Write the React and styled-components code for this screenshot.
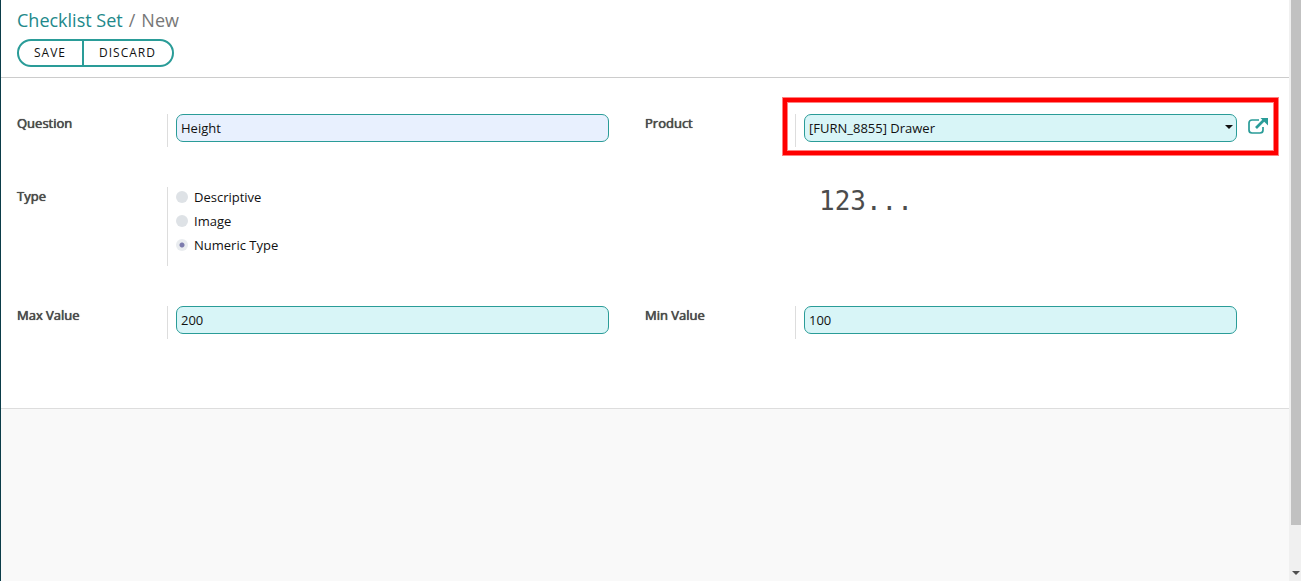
import React, { useState } from "react";
import styled, { createGlobalStyle } from "styled-components";

const teal = "#2a9c98";

const GlobalStyle = createGlobalStyle`
  *, *::before, *::after { box-sizing: border-box; }
  body {
    margin: 0;
    background: #f9f9f9;
    color: #111;
    font: 13px/20px "Open Sans", "Noto Sans", sans-serif;
  }
`;

const Page = styled.div`
  display: flex;
  min-height: 100vh;
  border-left: 1px solid #0b3c49;
`;

const Main = styled.main`
  flex: 1;
  min-width: 0;
`;

const Header = styled.header`
  padding: 8px 16px 10px;
  background: #fff;
  border-bottom: 1px solid #ccc;
`;

const Breadcrumb = styled.nav`
  display: flex;
  gap: 6px;
  margin-bottom: 7px;
  color: #777;
  font-size: 18px;
  line-height: 24px;
`;

const BreadcrumbLink = styled.a`
  color: #21888a;
  text-decoration: none;
`;

const ButtonGroup = styled.div`
  display: flex;
`;

const Button = styled.button`
  height: 28px;
  padding: 0 16px 0 15px;
  border: 2px solid ${teal};
  background: #fff;
  color: #111;
  font: 12px/24px "Open Sans", "Noto Sans", sans-serif;
  letter-spacing: 1px;
  text-transform: uppercase;
  cursor: pointer;

  &:first-child { border-radius: 14px 0 0 14px; }
  &:last-child { margin-left: -2px; border-radius: 0 14px 14px 0; }
`;

const Sheet = styled.form`
  display: grid;
  grid-template-columns: 1fr 1fr;
  row-gap: 40px;
  padding: 36px 16px 69px;
  background: #fff;
  border-bottom: 1px solid #ddd;
`;

const Field = styled.div`
  display: grid;
  grid-template-columns: 150px minmax(0, 1fr);
  min-width: 0;
  margin: 0;
`;

const Label = styled.label`
  color: #4c4c4c;
  line-height: 18px;
  text-shadow: 0 0 0 #4c4c4c, 0 0 1px #4c4c4c;
`;

const Control = styled.div`
  position: relative;
  display: flex;
  align-items: flex-start;
  min-height: ${(p) => (p.$tall ? "79px" : "33px")};
  padding: 0 ${(p) => (p.$link ? "5px" : "36px")} 0 8px;
  border-left: 1px solid #ddd;
`;

const Highlight = styled.div`
  position: absolute;
  inset: -17px -6px -9px -14px;
  border: 1px solid #ff8080;
  pointer-events: none;

  &::before {
    content: "";
    position: absolute;
    inset: 0;
    border: 4px solid #f00;
  }

  &::after {
    content: "";
    position: absolute;
    inset: 4px;
    border: 1px solid #ff8080;
  }
`;

const Input = styled.input`
  flex: 1;
  min-width: 0;
  width: 100%;
  height: 28px;
  padding: 0 4px;
  border: 1px solid ${teal};
  border-radius: 7px;
  background: ${(p) => (p.$filled ? "#e8f0fe" : "#d8f5f7")};
  color: #111;
  font: inherit;
`;

const SelectWrap = styled.div`
  position: relative;
  flex: 1;
  min-width: 0;
`;

const Select = styled(Input)`
  display: block;
  appearance: none;
`;

const Caret = styled.svg`
  position: absolute;
  top: 11px;
  right: 4px;
  width: 8px;
  height: 4px;
  pointer-events: none;
`;

const ExternalLink = styled.a`
  display: flex;
  width: 20px;
  margin: 3px 0 0 11px;
  color: ${teal};
`;

const Options = styled.div`
  display: grid;
  gap: 4px;
`;

const Option = styled.label`
  display: flex;
  align-items: center;
  gap: 6px;
`;

const Radio = styled.input`
  appearance: none;
  width: 12px;
  height: 12px;
  margin: 0;
  border-radius: 50%;
  background: #dee2e6;

  &:checked {
    background: radial-gradient(circle, #7c7bad 2px, #e9ecef 3px);
  }
`;

const Preview = styled.div`
  padding-left: 174px;
  color: #4c4c4c;
  font: 26px/28px "DejaVu Sans Mono", monospace;
`;

const ScrollTrack = styled.div`
  display: flex;
  flex-direction: column;
  align-items: flex-end;
  justify-content: space-between;
  width: 12px;
  background: #f0f0f0;
`;

const ScrollThumb = styled.div`
  width: 10px;
  height: 525px;
  background: #c1c1c1;
`;

const ScrollArrow = styled.svg`
  width: 8px;
  height: 4px;
  margin: 0 1px 6px 0;
`;

const types = ["Descriptive", "Image", "Numeric Type"];

function TextField({ id, label, value, filled }) {
  return (
    <Field>
      <Label htmlFor={id}>{label}</Label>
      <Control>
        <Input id={id} defaultValue={value} $filled={filled} />
      </Control>
    </Field>
  );
}

export default function App() {
  const [type, setType] = useState("Numeric Type");
  return (
    <>
      <GlobalStyle />
      <Page>
        <Main>
          <Header>
            <Breadcrumb>
              <BreadcrumbLink href="#checklist">Checklist Set</BreadcrumbLink>
              <span>/</span>
              <span>New</span>
            </Breadcrumb>
            <ButtonGroup>
              <Button type="submit" form="checklist">Save</Button>
              <Button type="button">Discard</Button>
            </ButtonGroup>
          </Header>
          <Sheet id="checklist" onSubmit={(e) => e.preventDefault()}>
            <TextField id="question" label="Question" value="Height" filled />
            <Field>
              <Label htmlFor="product">Product</Label>
              <Control $link>
                <SelectWrap>
                  <Select as="select" id="product">
                    <option>[FURN_8855] Drawer</option>
                  </Select>
                  <Caret viewBox="0 0 8 4" aria-hidden="true">
                    <path d="M0 0h8L4 4z" fill="#111" />
                  </Caret>
                </SelectWrap>
                <ExternalLink href="#product" aria-label="Open product">
                  <svg width="20" height="18" viewBox="0 0 20 18" fill="none" aria-hidden="true">
                    <path d="M11 3H4a3 3 0 0 0-3 3v7a3 3 0 0 0 3 3h8a3 3 0 0 0 3-3v-3" stroke="currentColor" strokeWidth="1.7" />
                    <path d="M8 11l8-8" stroke="currentColor" strokeWidth="2.6" />
                    <path d="M12.5 1H20v7.5z" fill="currentColor" />
                  </svg>
                </ExternalLink>
                <Highlight />
              </Control>
            </Field>
            <Field role="radiogroup" aria-labelledby="type-label">
              <Label as="span" id="type-label">Type</Label>
              <Control $tall>
                <Options>
                  {types.map((name) => (
                    <Option key={name}>
                      <Radio type="radio" name="type" checked={type === name} onChange={() => setType(name)} />
                      {name}
                    </Option>
                  ))}
                </Options>
              </Control>
            </Field>
            <Preview>123...</Preview>
            <TextField id="max" label="Max Value" value="200" />
            <TextField id="min" label="Min Value" value="100" />
          </Sheet>
        </Main>
        <ScrollTrack aria-hidden="true">
          <ScrollThumb />
          <ScrollArrow viewBox="0 0 8 4">
            <path d="M0 0h8L4 4z" fill="#505050" />
          </ScrollArrow>
        </ScrollTrack>
      </Page>
    </>
  );
}
